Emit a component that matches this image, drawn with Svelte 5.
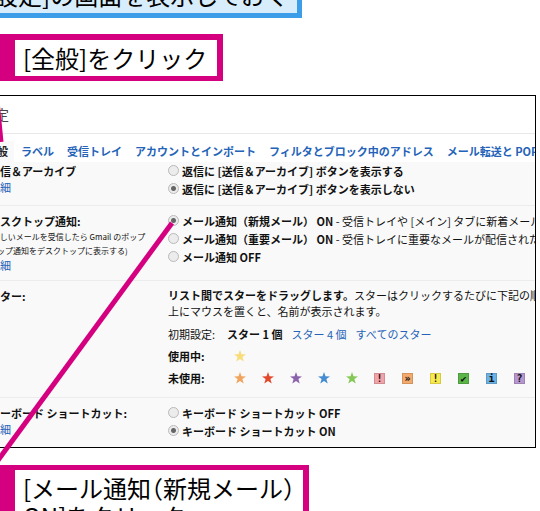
<script lang="ts">
    type star = { name: string; color: string };
    type badge = { name: string; mark: string };

    let archive = 'hide';
    let notify = 'new';
    let shortcuts = 'on';

    const tabs = ['全般', 'ラベル', '受信トレイ', 'アカウントとインポート', 'フィルタとブロック中のアドレス', 'メール転送と POP/IMAP'];

    const stars: star[] = [
        { name: 'orange', color: '#f0a45c' },
        { name: 'red', color: '#e2492c' },
        { name: 'purple', color: '#8b62ab' },
        { name: 'blue', color: '#468cd0' },
        { name: 'green', color: '#86c855' }
    ];

    const badges: badge[] = [
        { name: 'pink', mark: '!' },
        { name: 'amber', mark: '»' },
        { name: 'yellow', mark: '!' },
        { name: 'lime', mark: '✔' },
        { name: 'sky', mark: 'i' },
        { name: 'violet', mark: '?' }
    ];

    const starPath = 'M6 0 L7.5 4.3 L12 4.4 L8.4 7.1 L9.7 11.5 L6 8.9 L2.3 11.5 L3.6 7.1 L0 4.4 L4.5 4.3 Z';
</script>

<main lang="ja">
    <div class="sheet">
        <p class="box note">[設定]の画面を表示しておく</p>
        <p class="box step">[全般]をクリック</p>

        <section class="window">
            <h1>設定</h1>
            <nav>
                {#each tabs as tab, i}
                    <a href="#tab{i}" class:active={i === 0}>{tab}</a>
                {/each}
            </nav>

            <div class="settings">
                <div class="row first">
                    <div class="name">
                        <b>送信＆アーカイブ</b>
                        <a href="#archive">詳細</a>
                    </div>
                    <div class="options">
                        <label><input type="radio" bind:group={archive} value="show" />返信に [送信＆アーカイブ] ボタンを表示する</label>
                        <label><input type="radio" bind:group={archive} value="hide" />返信に [送信＆アーカイブ] ボタンを表示しない</label>
                    </div>
                </div>

                <div class="row">
                    <div class="name">
                        <b>デスクトップ通知:</b>
                        <small>(新しいメールを受信したら Gmail のポップ<br />アップ通知をデスクトップに表示する)</small>
                        <a href="#notify">詳細</a>
                    </div>
                    <div class="options">
                        <label><input type="radio" bind:group={notify} value="new" /><span>メール通知（新規メール） ON <i>- 受信トレイや [メイン] タブに新着メールが届いたとき</i></span></label>
                        <label><input type="radio" bind:group={notify} value="important" /><span>メール通知（重要メール） ON <i>- 受信トレイに重要なメールが配信されたとき</i></span></label>
                        <label><input type="radio" bind:group={notify} value="off" />メール通知 OFF</label>
                    </div>
                </div>

                <div class="row stars">
                    <div class="name"><b>スター:</b></div>
                    <div>
                        <p><b>リスト間でスターをドラッグします。</b>スターはクリックするたびに下記の順序で<br />上にマウスを置くと、名前が表示されます。</p>
                        <div class="presets">
                            <span>初期設定:</span>
                            <b>スター 1 個</b>
                            <a href="#four">スター 4 個</a>
                            <a href="#all">すべてのスター</a>
                        </div>
                        <div class="icons">
                            <b>使用中:</b>
                            <svg viewBox="0 0 12 12"><path d={starPath} fill="#f8dc78" /></svg>
                        </div>
                        <div class="icons">
                            <b>未使用:</b>
                            {#each stars as s (s.name)}
                                <svg viewBox="0 0 12 12"><path d={starPath} fill={s.color} /></svg>
                            {/each}
                            {#each badges as b (b.name)}
                                <span class="badge {b.name}">{b.mark}</span>
                            {/each}
                        </div>
                    </div>
                </div>

                <div class="row">
                    <div class="name">
                        <b>キーボード ショートカット:</b>
                        <a href="#shortcuts">詳細</a>
                    </div>
                    <div class="options">
                        <label><input type="radio" bind:group={shortcuts} value="off" />キーボード ショートカット OFF</label>
                        <label><input type="radio" bind:group={shortcuts} value="on" />キーボード ショートカット ON</label>
                    </div>
                </div>
            </div>
        </section>

        <p class="box step last">[メール通知（新規メール）<br />ON]をクリック</p>

        <!-- leader lines from the steps to the controls -->
        <svg class="leaders" viewBox="0 0 200 480">
            <path d="M16 50 L25 142" />
            <path d="M196 223 L20 463" />
        </svg>
    </div>
</main>

<style>
    :global(body) {
        margin: 0;
        background: #fff;
    }

    main {
        height: 100vh;
        overflow: hidden;
        font-family: "Noto Sans CJK JP", "Noto Sans", sans-serif;
        font-size: 11px;
        line-height: 18px;
        color: #111;
        white-space: nowrap;
    }

    .sheet {
        position: relative;
        display: flex;
        flex-direction: column;
        align-items: flex-start;
        margin: -28px 4px 0 -24px;
    }

    p {
        margin: 0;
    }

    a {
        color: #2463b8;
        text-decoration: none;
    }

    .box {
        padding: 0 8px;
        font-size: 24px;
        line-height: 36px;
        color: #000;
        background: #fff;
        font-feature-settings: "halt";
    }

    .note {
        padding-left: 5px;
        border: 5px solid #3c9de8;
        background: #d7edfb;
    }

    .step {
        margin-top: 16px;
        padding-right: 10px;
        border: 6px solid #d4007f;
        border-bottom-width: 5px;
        border-left-width: 39px;
    }

    .last {
        margin-top: 17px;
        padding: 4px 8px;
        border-top-width: 5px;
        line-height: 28px;
    }

    .window {
        align-self: stretch;
        margin-top: 14px;
        border: 1px solid #000;
        overflow: hidden;
    }

    h1 {
        margin: 0;
        padding-left: 4px;
        border-bottom: 1px solid #e8e8e8;
        font-size: 14px;
        font-weight: normal;
        line-height: 37px;
        color: #444;
    }

    nav {
        display: flex;
        gap: 1px;
        padding: 7px 0 0 3px;
        font-weight: bold;
        line-height: 21px;
    }

    nav a {
        padding: 0 6px;
    }

    nav .active {
        color: #222;
        background: #f9f9f9;
    }

    .settings {
        background: #f9f9f9;
    }

    .row {
        display: grid;
        grid-template-columns: 179px 1fr;
        padding: 6px 0 7px 12px;
        border-top: 1px solid #ececec;
    }

    .first {
        padding-top: 0;
        border-top: none;
    }

    .stars {
        padding-bottom: 10px;
    }

    .name,
    .options {
        display: flex;
        flex-direction: column;
        align-items: flex-start;
    }

    .name a {
        line-height: 15px;
    }

    .options {
        font-weight: bold;
    }

    i {
        font-style: normal;
        font-weight: normal;
    }

    small {
        font-size: 8px;
        line-height: 14px;
    }

    label {
        display: flex;
        align-items: center;
        gap: 3px;
    }

    input {
        appearance: none;
        box-sizing: border-box;
        width: 11px;
        height: 11px;
        margin: 0 0 2px;
        border: 1px solid #b9b9b9;
        border-radius: 50%;
        background: #ececec;
    }

    input:checked {
        background: radial-gradient(circle, #666 0 2px, #ececec 3px);
    }

    .stars p {
        line-height: 16px;
    }

    .presets {
        display: flex;
        gap: 9px;
        margin-top: 6px;
    }

    .presets b {
        margin-left: 3px;
    }

    .icons {
        display: flex;
        align-items: center;
        gap: 16px;
        margin-top: 4px;
    }

    .icons b {
        width: 50px;
    }

    .icons svg {
        width: 12px;
        height: 12px;
    }

    .badge {
        box-sizing: border-box;
        width: 11px;
        height: 11px;
        margin-right: 1px;
        border: 1px solid #0002;
        font-family: "DejaVu Sans Mono", monospace;
        font-size: 10px;
        font-weight: bold;
        line-height: 9px;
        text-align: center;
    }

    .pink { background: #f2a3a8; }
    .amber { background: #f3aa6c; }
    .yellow { background: #f8ea4e; }
    .lime { background: #5bb548; }
    .sky { background: #6cb2e4; }
    .violet { background: #b797cf; }

    .leaders {
        position: absolute;
        top: 28px;
        left: 0;
        width: 200px;
        height: 480px;
        fill: none;
        stroke: #d4007f;
        stroke-width: 5;
        pointer-events: none;
    }
</style>
